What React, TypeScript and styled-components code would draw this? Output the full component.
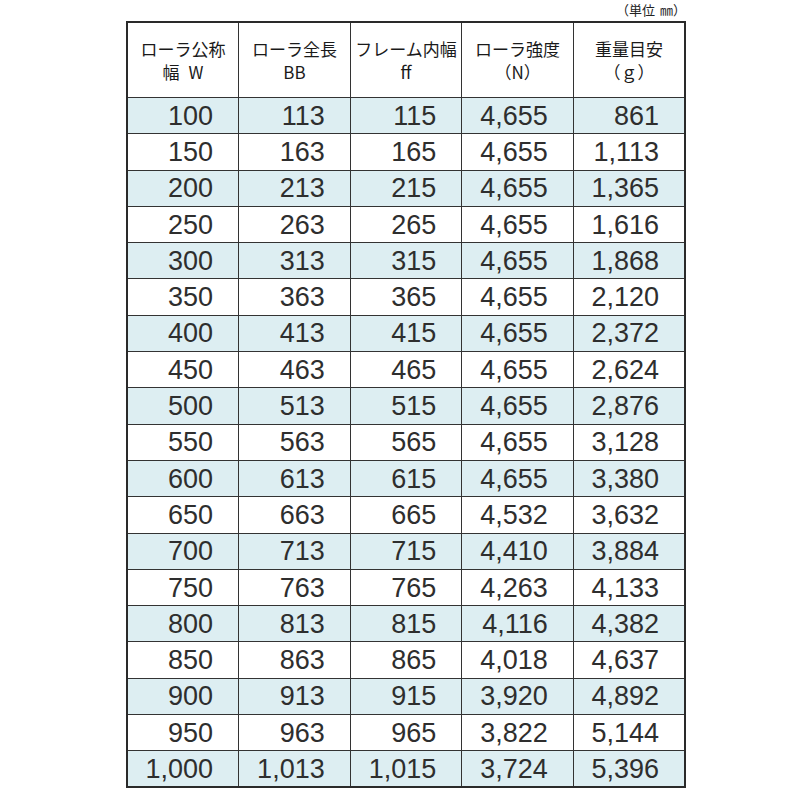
import React from 'react';
import styled, { createGlobalStyle } from 'styled-components';

const GlobalStyle = createGlobalStyle`
  html, body {
    margin: 0;
    padding: 0;
    background: #ffffff;
  }
`;

const Page = styled.div`
  width: 560px;
  margin-left: 126px;
  padding-top: 2px;
`;

const Unit = styled.div`
  font-family: "Noto Sans CJK JP", "Liberation Sans", sans-serif;
  font-size: 13px;
  line-height: 16px;
  color: #222;
  text-align: right;
  margin-bottom: 3px;
`;

const Table = styled.table`
  width: 560px;
  table-layout: fixed;
  border-collapse: collapse;
  border: 2px solid #2a2a2a;
`;

const HeadCell = styled.th`
  height: 74px;
  padding: 0;
  border: 1.5px solid #333;
  font-family: "Noto Sans CJK JP", "Liberation Sans", sans-serif;
  font-weight: 400;
  font-size: 17px;
  line-height: 23px;
  color: #1a1a1a;
  text-align: center;
  vertical-align: middle;
`;

const Gap = styled.span<{ $w: number }>`
  display: inline-block;
  width: ${(p) => p.$w}px;
`;

const Row = styled.tr<{ $shaded: boolean }>`
  height: 36.3px;
  background: ${(p) => (p.$shaded ? '#ddeef2' : '#ffffff')};
`;

const Cell = styled.td`
  padding: 0 25px 0 0;
  border: 1.5px solid #333;
  font-family: "Liberation Sans Narrow", "Liberation Sans", sans-serif;
  font-size: 27px;
  line-height: 30px;
  color: #2e2e2e;
  text-align: right;
  vertical-align: middle;
`;

const headers: [string, React.ReactNode][] = [
  ['ローラ公称', <>幅<Gap $w={9} />W</>],
  ['ローラ全長', 'BB'],
  ['フレーム内幅', 'ff'],
  ['ローラ強度', '（N）'],
  ['重量目安', '（ｇ）'],
];

const rows: string[][] = [
  ['100', '113', '115', '4,655', '861'],
  ['150', '163', '165', '4,655', '1,113'],
  ['200', '213', '215', '4,655', '1,365'],
  ['250', '263', '265', '4,655', '1,616'],
  ['300', '313', '315', '4,655', '1,868'],
  ['350', '363', '365', '4,655', '2,120'],
  ['400', '413', '415', '4,655', '2,372'],
  ['450', '463', '465', '4,655', '2,624'],
  ['500', '513', '515', '4,655', '2,876'],
  ['550', '563', '565', '4,655', '3,128'],
  ['600', '613', '615', '4,655', '3,380'],
  ['650', '663', '665', '4,532', '3,632'],
  ['700', '713', '715', '4,410', '3,884'],
  ['750', '763', '765', '4,263', '4,133'],
  ['800', '813', '815', '4,116', '4,382'],
  ['850', '863', '865', '4,018', '4,637'],
  ['900', '913', '915', '3,920', '4,892'],
  ['950', '963', '965', '3,822', '5,144'],
  ['1,000', '1,013', '1,015', '3,724', '5,396'],
];

function App() {
  return (
    <Page>
      <GlobalStyle />
      <Unit>（単位<Gap $w={5} />㎜）</Unit>
      <Table>
        <thead>
          <tr>
            {headers.map(([a, b]) => (
              <HeadCell key={a}>
                {a}
                <br />
                {b}
              </HeadCell>
            ))}
          </tr>
        </thead>
        <tbody>
          {rows.map((r, i) => (
            <Row key={r[0]} $shaded={i % 2 === 0}>
              {r.map((v, j) => (
                <Cell key={j}>{v}</Cell>
              ))}
            </Row>
          ))}
        </tbody>
      </Table>
    </Page>
  );
}

export default App;
